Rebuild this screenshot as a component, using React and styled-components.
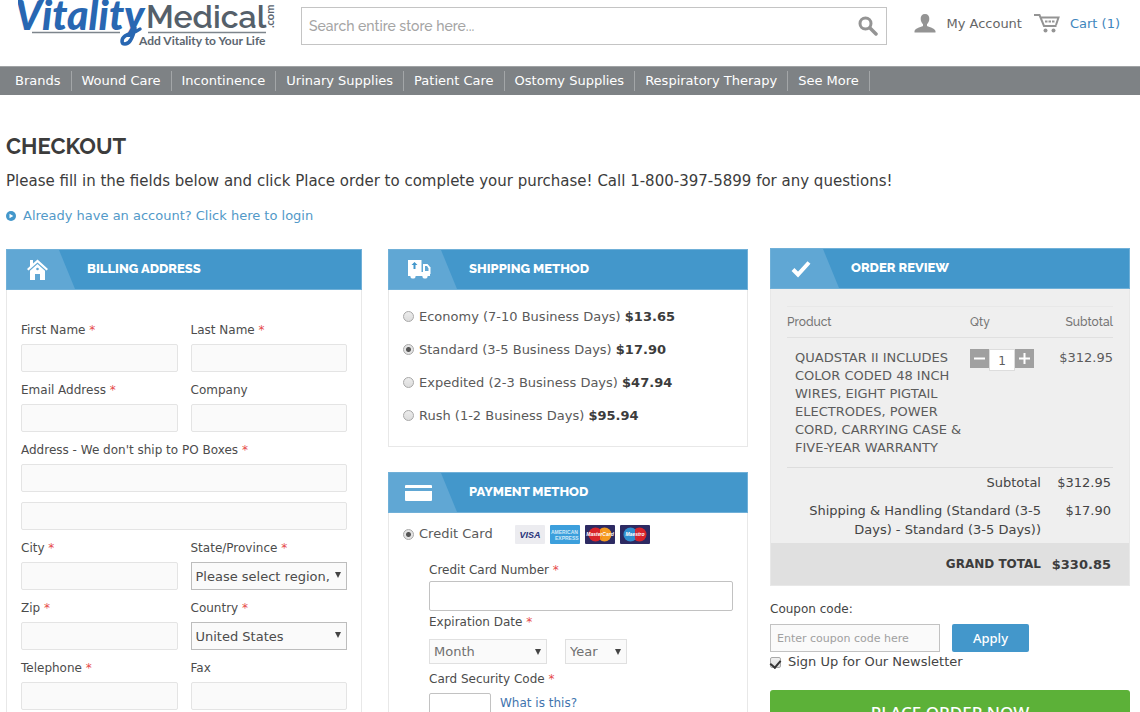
import { useState } from "react";
import styled, { createGlobalStyle } from "styled-components";

const GlobalStyle = createGlobalStyle`
    * {
        box-sizing: border-box;
    }

    body {
        margin: 0;
        background: #fff;
        color: #444;
        font-family: Verdana, "DejaVu Sans", sans-serif;
        font-size: 13px;
        overflow-x: hidden;
    }

    button, input, select {
        font-family: inherit;
        font-size: inherit;
        color: inherit;
        margin: 0;
    }

    a {
        text-decoration: none;
    }
`;

const menu = [
    "Brands",
    "Wound Care",
    "Incontinence",
    "Urinary Supplies",
    "Patient Care",
    "Ostomy Supplies",
    "Respiratory Therapy",
    "See More",
];

const billingFields = [
    { id: "firstname", label: "First Name", required: true },
    { id: "lastname", label: "Last Name", required: true },
    { id: "email", label: "Email Address", required: true },
    { id: "company", label: "Company" },
    { id: "street", label: "Address - We don't ship to PO Boxes", required: true, wide: true, lines: 2 },
    { id: "city", label: "City", required: true },
    { id: "region", label: "State/Province", required: true, options: ["Please select region, state or province"] },
    { id: "zip", label: "Zip", required: true },
    { id: "country", label: "Country", required: true, options: ["United States"] },
    { id: "telephone", label: "Telephone", required: true },
    { id: "fax", label: "Fax" },
];

const shippingMethods = [
    { id: "economy", name: "Economy (7-10 Business Days)", price: "$13.65" },
    { id: "standard", name: "Standard (3-5 Business Days)", price: "$17.90" },
    { id: "expedited", name: "Expedited (2-3 Business Days)", price: "$47.94" },
    { id: "rush", name: "Rush (1-2 Business Days)", price: "$95.94" },
];

const Header = styled.header`
    display: flex;
    align-items: flex-start;
    height: 66px;
    padding: 0 20px 0 18px;
`;

const LogoLink = styled.a`
    flex: 0 0 283px;
    height: 50px;
`;

const SearchForm = styled.form`
    flex: 1;
    display: flex;
    align-items: center;
    height: 38px;
    margin-top: 7px;
    border: 1px solid #c4c4c4;
`;

const SearchInput = styled.input`
    flex: 1;
    min-width: 0;
    height: 100%;
    padding: 0 7px;
    border: 0;
    outline: 0;
    background: none;
    font-family: Raleway, Lato, sans-serif;
    font-size: 14px;
    font-weight: 500;

    &::placeholder {
        color: #a4a4a4;
    }
`;

const SearchButton = styled.button`
    display: flex;
    padding: 0 8px;
    border: 0;
    background: none;
`;

const UserLinks = styled.nav`
    display: flex;
    align-items: center;
    height: 24px;
    margin: 11px 0 0 27px;
`;

const UserLink = styled.a`
    display: flex;
    align-items: center;
    gap: 10px;
    margin-right: ${({ $last }) => ($last ? "0" : "12px")};
    color: ${({ $blue }) => ($blue ? "#3f86bd" : "#666")};
`;

const MainMenu = styled.nav`
    display: flex;
    align-items: center;
    height: 29px;
    padding-left: 5px;
    background: #7e8285;
    border-top: 1px solid #a0a3a5;
`;

const MenuLink = styled.a`
    padding: 0 10px;
    line-height: 20px;
    color: #fff;
    border-right: 1px solid #a3a6a8;
`;

const Main = styled.main`
    padding: 36px 10px 0 6px;
`;

const Title = styled.h1`
    margin: 0;
    font-family: Raleway, Lato, sans-serif;
    font-size: 22px;
    font-weight: 700;
    line-height: 30px;
    color: #3c3c3c;
`;

const Intro = styled.p`
    margin: 10px 0 0;
    font-size: 15px;
    line-height: 20px;
    color: #3c3c3c;
`;

const LoginLink = styled.a`
    display: flex;
    align-items: center;
    gap: 7px;
    margin-top: 15px;
    line-height: 20px;
    color: #5299c8;
`;

const Columns = styled.div`
    display: grid;
    grid-template-columns: repeat(3, minmax(0, 1fr));
    align-items: start;
    gap: 22px;
    margin-top: 22px;
`;

const Column = styled.div`
    display: flex;
    flex-direction: column;
    gap: ${({ $gap }) => $gap || "25px"};
    padding: ${({ $inset }) => $inset || "0"};
`;

const Panel = styled.section`
    border: 1px solid #e8e8e8;
    border-top: 0;
    background: ${({ $grey }) => ($grey ? "#efefef" : "#fff")};
`;

const PanelHead = styled.div`
    display: flex;
    align-items: center;
    height: 41px;
    margin: 0 -1px;
    background: #4397cb;
    border: 1px solid #70b0d8;
`;

const PanelIcon = styled.span`
    display: flex;
    align-items: center;
    height: 100%;
    width: 68px;
    padding-left: ${({ $left }) => $left || "19px"};
    background: #60a7d4;
    clip-path: polygon(0 0, 52px 0, 68px 100%, 0 100%);
`;

const PanelTitle = styled.h2`
    margin: 0 0 2px 12px;
    font-family: Raleway, Lato, sans-serif;
    font-size: 13px;
    font-weight: 800;
    line-height: 20px;
    color: #fff;
`;

const BillingGrid = styled.div`
    display: grid;
    grid-template-columns: 1fr 1fr;
    gap: 9px 13px;
    padding: 31px 14px 20px;
`;

const Field = styled.div`
    display: flex;
    flex-direction: column;
    min-width: 0;
    grid-column: ${({ $wide }) => ($wide ? "1 / -1" : "auto")};
`;

const Label = styled.label`
    margin-bottom: ${({ $space }) => $space || "4px"};
    font-size: 12px;
    line-height: 19px;
    color: #4c4c4c;
`;

const Star = styled.em`
    font-style: normal;
    color: #e64a4a;
`;

const Input = styled.input`
    width: ${({ $width }) => $width || "100%"};
    height: ${({ $tall }) => ($tall ? "30px" : "28px")};
    padding: 0 6px;
    border: 1px solid ${({ $tall }) => ($tall ? "#c2c2c2" : "#e4e4e4")};
    border-radius: 2px;
    background: ${({ $tall }) => ($tall ? "#fff" : "#fafafa")};

    & + & {
        margin-top: 10px;
    }
`;

const SelectWrap = styled.div`
    position: relative;
    width: ${({ $width }) => $width || "100%"};

    &::after {
        content: "";
        position: absolute;
        top: 10px;
        right: 6px;
        border: solid transparent;
        border-width: 6px 3px 0;
        border-top-color: #444;
        pointer-events: none;
    }
`;

const Select = styled.select`
    appearance: none;
    display: block;
    width: 100%;
    height: ${({ $light }) => ($light ? "25px" : "28px")};
    padding: 0 14px 0 4px;
    border: 1px solid ${({ $light }) => ($light ? "#e0e0e0" : "#bdbdbd")};
    border-radius: 0;
    background: #fafafa;
    color: ${({ $light }) => ($light ? "#707070" : "#4c4c4c")};
`;

const MethodList = styled.div`
    display: flex;
    flex-direction: column;
    padding: 10px 14px 14px;
`;

const RadioLabel = styled.label`
    display: flex;
    align-items: center;
    gap: 5px;
    line-height: ${({ $short }) => ($short ? "20px" : "33px")};
    color: #5a5a5a;
`;

const Radio = styled.input`
    appearance: none;
    width: 11px;
    height: 11px;
    border: 1px solid #a8a8a8;
    border-radius: 50%;
    background: linear-gradient(#ececec, #dcdcdc);

    &:checked {
        background: radial-gradient(circle, #555 0 2px, #e4e4e4 3px);
    }
`;

const Price = styled.b`
    color: #3c3c3c;
`;

const CardRow = styled.div`
    display: flex;
    align-items: center;
    gap: 22px;
    padding: 11px 14px 0;
`;

const CardLogos = styled.div`
    display: flex;
    gap: 5px;
`;

const CardForm = styled.div`
    padding: 17px 14px 20px 40px;
`;

const CardField = styled(Field)`
    margin-bottom: ${({ $gap }) => $gap || "2px"};
`;

const InlineRow = styled.div`
    display: flex;
    align-items: ${({ $top }) => ($top ? "flex-start" : "center")};
    gap: ${({ $gap }) => $gap};
`;

const HelpLink = styled.a`
    font-size: 12px;
    line-height: 20px;
    color: #3f74ae;
`;

const ItemTable = styled.table`
    width: calc(100% - 32px);
    margin: 17px 16px 0;
    border-collapse: collapse;
    border-bottom: 1px solid #ddd;
`;

const HeadCell = styled.th`
    padding: 0;
    width: ${({ $width }) => $width || "auto"};
    height: 31px;
    border-top: 1px solid #e8e8e8;
    border-bottom: 1px solid #e0e0e0;
    font-family: Raleway, Lato, sans-serif;
    font-size: 12px;
    font-weight: 500;
    text-align: ${({ $right }) => ($right ? "right" : "left")};
    color: #757575;
`;

const ItemCell = styled.td`
    padding: ${({ $name }) => ($name ? "11px 0 10px 8px" : "11px 0 0")};
    vertical-align: top;
    line-height: 18px;
    text-align: ${({ $right }) => ($right ? "right" : "left")};
    color: #5c5c5c;
`;

const Stepper = styled.div`
    display: flex;
    align-items: flex-start;
`;

const StepButton = styled.button`
    display: flex;
    align-items: center;
    justify-content: center;
    width: 19px;
    height: 19px;
    padding: 0;
    border: 0;
    background: #a0a0a0;
`;

const QtyInput = styled.input`
    width: 26px;
    height: 22px;
    padding: 2px 0 0;
    border: 1px solid #ddd;
    background: #fff;
    font-size: 12px;
    text-align: center;
`;

const TotalsTable = styled.table`
    width: 100%;
    border-collapse: collapse;
`;

const TotalLabel = styled.th`
    padding: 5px 0 4px 20px;
    font-weight: 400;
    line-height: 19px;
    text-align: right;
    vertical-align: top;
`;

const TotalValue = styled.td`
    width: 88px;
    padding: 5px 18px 4px 0;
    line-height: 19px;
    text-align: right;
    vertical-align: top;
`;

const GrandRow = styled.tr`
    background: #e0e0e0;
    color: #3c3c3c;

    & > * {
        padding-top: 12px;
        padding-bottom: 11px;
        font-weight: 700;
    }

    & > th {
        font-size: 12px;
    }
`;

const Extras = styled.div`
    display: flex;
    flex-direction: column;
`;

const CouponLabel = styled.label`
    margin-bottom: 5px;
    font-size: 12px;
    line-height: 19px;
`;

const CouponInput = styled.input`
    width: 170px;
    height: 28px;
    padding: 0 6px;
    border: 1px solid #c2c2c2;
    background: #fafafa;
    font-size: 11px;

    &::placeholder {
        color: #a0a0a0;
    }
`;

const ApplyButton = styled.button`
    width: 77px;
    height: 28px;
    border: 0;
    border-radius: 2px;
    background: #4397cb;
    color: #fff;
    font-family: "Noto Sans", sans-serif;
    font-size: 13px;
    font-weight: 500;
`;

const CheckLabel = styled.label`
    display: flex;
    align-items: center;
    gap: 7px;
    line-height: 20px;
`;

const CheckInput = styled.input`
    appearance: none;
    display: flex;
    justify-content: center;
    width: 11px;
    height: 11px;
    border: 1px solid #a8a8a8;
    border-radius: 2px;
    background: linear-gradient(#f0f0f0, #dcdcdc);

    &:checked::before {
        content: "";
        width: 5px;
        height: 8px;
        border: solid #333;
        border-width: 0 2px 2px 0;
        transform: rotate(40deg);
    }
`;

const PlaceOrder = styled.button`
    height: 44px;
    margin-top: 18px;
    padding: 0;
    border: 0;
    border-radius: 3px;
    background: #5cb138;
    color: #fff;
    font-family: "Noto Sans", sans-serif;
    font-size: 17px;
    font-weight: 500;
`;

const Logo = () => (
    <svg width="262" height="50" viewBox="0 0 262 50" role="img" aria-label="Vitality Medical">
        <path d="M14 32.500H102M130 32.500H248" stroke="#7d858c" strokeWidth="1.500" />
        <path d="M117 28c-2 9-5 16-10 16-4 0-4-5 0-8 4-3 10-3 15-7" fill="none" stroke="#2867b2" strokeWidth="3.500" strokeLinecap="round" />
        <g fontFamily="Lato, sans-serif">
            <text x="-3" y="30" fontSize="41" fontWeight="900" fontStyle="italic" fill="#2867b2">
                Vitality
            </text>
            <text x="128" y="28" fontSize="32" fontWeight="600" fontFamily="Raleway, Lato, sans-serif" fill="#55606a">
                Medical
            </text>
            <text x="121" y="45" fontSize="12" fontWeight="700" fill="#5c6670">
                Add Vitality to Your Life
            </text>
            <text transform="translate(256 28) rotate(-90)" fontSize="11" fontWeight="700" fill="#5c6670">
                .com
            </text>
        </g>
    </svg>
);

const SearchIcon = () => (
    <svg width="20" height="20" viewBox="0 0 20 20" fill="none" stroke="#949494">
        <circle cx="7.500" cy="7.500" r="5.500" strokeWidth="3" />
        <path d="M12 12l6 6" strokeWidth="3.500" strokeLinecap="round" />
    </svg>
);

const UserIcon = () => (
    <svg width="22" height="19" viewBox="0 0 22 19" fill="#949494">
        <path d="M11 0c3 0 4.500 2 4.300 5-.1 2.400-1.100 4.200-2.300 5.200v1.500c0 1 8 2 8.500 5.300v1.500H.500V17C1 13.700 9 12.700 9 11.700v-1.500C7.800 9.200 6.800 7.400 6.700 5 6.500 2 8 0 11 0z" />
    </svg>
);

const CartIcon = () => (
    <svg width="26" height="20" viewBox="0 0 26 20" fill="none" stroke="#949494" strokeWidth="2">
        <path d="M0 2h5.500l4.500 11H22.500M6.500 4.500h18L22 12" />
        <path d="M11 8.500h2.500M14.500 8.500h2.500M18 8.500h2.500" />
        <circle cx="11.500" cy="17.500" r="2" fill="#949494" stroke="none" />
        <circle cx="19.500" cy="17.500" r="2" fill="#949494" stroke="none" />
    </svg>
);

const ArrowIcon = () => (
    <svg width="10" height="10" viewBox="0 0 10 10">
        <circle cx="5" cy="5" r="5" fill="#4397cb" />
        <path d="M3.500 2.700L7.300 5 3.500 7.300z" fill="#fff" />
    </svg>
);

const HomeIcon = () => (
    <svg width="23" height="22" viewBox="0 0 23 22">
        <path d="M4 1h3v3.500l4.500-4L22 10l-1.500 1.600-9-8-9 8L1 10l3-2.700z" fill="#fff" />
        <path d="M11.500 5l7.500 6.700V21h-5v-6H9v6H4v-9.300z" fill="#fff" />
        <circle cx="11.500" cy="10" r="1.300" fill="#60a7d4" />
    </svg>
);

const TruckIcon = () => (
    <svg width="23" height="19" viewBox="0 0 23 19">
        <path d="M0 0h13.500v13H0zM0 12h22v4H0z" fill="#fff" />
        <path d="M15 4h4.500l3 3.500V14H15z" fill="#fff" />
        <path d="M17 6h2l1.500 2.500V11H17z" fill="#60a7d4" />
        <path d="M6.500 2L9.500 5H7.500V9h-2V5h-2z" fill="#4397cb" />
        <circle cx="5" cy="16" r="2.600" fill="#fff" />
        <circle cx="17" cy="16" r="2.600" fill="#fff" />
    </svg>
);

const CreditIcon = () => (
    <svg width="27" height="16" viewBox="0 0 27 16">
        <rect width="27" height="16" rx="1" fill="#fff" />
        <rect y="3" width="27" height="3" fill="#60a7d4" />
    </svg>
);

const CheckIcon = () => (
    <svg width="20" height="18" viewBox="0 0 20 18" fill="none" stroke="#fff" strokeWidth="4">
        <path d="M2 9.500l5 5L18 2.500" />
    </svg>
);

const Visa = () => (
    <svg width="30" height="19" viewBox="0 0 30 19" role="img" aria-label="Visa">
        <rect width="30" height="19" rx="1" fill="#ececf0" />
        <text x="15" y="13" textAnchor="middle" fontFamily="Liberation Sans, sans-serif" fontSize="9" fontWeight="700" fontStyle="italic" fill="#27337a">
            VISA
        </text>
    </svg>
);

const Amex = () => (
    <svg width="30" height="19" viewBox="0 0 30 19" role="img" aria-label="American Express">
        <rect width="30" height="19" rx="1" fill="#3c9fdc" />
        <g fontFamily="Liberation Sans, sans-serif" fontSize="5" fontWeight="700" fill="#cfe8f8">
            <text x="1" y="9">AMERICAN</text>
            <text x="5" y="15">EXPRESS</text>
        </g>
    </svg>
);

const TwoCircles = ({ name, left, right }) => (
    <svg width="30" height="19" viewBox="0 0 30 19" role="img" aria-label={name}>
        <rect width="30" height="19" rx="1" fill="#2d2a62" />
        <circle cx="19.500" cy="9.500" r="7" fill={right} />
        <circle cx="10.500" cy="9.500" r="7" fill={left} />
        <path d="M15 4.100a7 7 0 0 1 0 10.800" fill={right} />
        <text x="15" y="11" textAnchor="middle" fontFamily="Liberation Sans, sans-serif" fontSize="5" fontWeight="700" fontStyle="italic" fill="#fff">
            {name}
        </text>
    </svg>
);

const FieldLabel = ({ id, text, required, space }) => (
    <Label htmlFor={id} $space={space}>
        {text} {required && <Star>*</Star>}
    </Label>
);

const PanelHeader = ({ icon, title, left }) => (
    <PanelHead>
        <PanelIcon $left={left}>{icon}</PanelIcon>
        <PanelTitle>{title}</PanelTitle>
    </PanelHead>
);

function BillingField({ field }) {
    return (
        <Field $wide={field.wide}>
            <FieldLabel id={field.id} text={field.label} required={field.required} />
            {field.options ? (
                <SelectWrap>
                    <Select id={field.id}>
                        {field.options.map(option => (
                            <option key={option}>{option}</option>
                        ))}
                    </Select>
                </SelectWrap>
            ) : (
                <Input id={field.id} type="text" />
            )}
            {field.lines === 2 && <Input type="text" aria-label="Address line 2" />}
        </Field>
    );
}

function App() {
    const [shipping, setShipping] = useState("standard");
    const [qty, setQty] = useState(1);

    return (
        <>
            <GlobalStyle />
            <Header>
                <LogoLink href="#">
                    <Logo />
                </LogoLink>
                <SearchForm onSubmit={e => e.preventDefault()}>
                    <SearchInput type="text" aria-label="Search" placeholder="Search entire store here..." />
                    <SearchButton type="submit" aria-label="Search">
                        <SearchIcon />
                    </SearchButton>
                </SearchForm>
                <UserLinks>
                    <UserLink href="#">
                        <UserIcon />
                        My Account
                    </UserLink>
                    <UserLink href="#" $blue $last>
                        <CartIcon />
                        Cart (1)
                    </UserLink>
                </UserLinks>
            </Header>
            <MainMenu>
                {menu.map(item => (
                    <MenuLink key={item} href="#">
                        {item}
                    </MenuLink>
                ))}
            </MainMenu>

            <Main>
                <Title>CHECKOUT</Title>
                <Intro>
                    Please fill in the fields below and click Place order to complete your purchase! Call 1-800-397-5899 for any questions!
                </Intro>
                <LoginLink href="#">
                    <ArrowIcon />
                    Already have an account? Click here to login
                </LoginLink>

                <Columns>
                    <Column $inset="1px 4px 0 0">
                        <Panel>
                            <PanelHeader icon={<HomeIcon />} title="BILLING ADDRESS" />
                            <BillingGrid>
                                {billingFields.map(field => (
                                    <BillingField key={field.id} field={field} />
                                ))}
                            </BillingGrid>
                        </Panel>
                    </Column>

                    <Column $inset="1px 0 0">
                        <Panel>
                            <PanelHeader icon={<TruckIcon />} title="SHIPPING METHOD" />
                            <MethodList>
                                {shippingMethods.map(method => (
                                    <RadioLabel key={method.id}>
                                        <Radio
                                            type="radio"
                                            name="shipping"
                                            checked={shipping === method.id}
                                            onChange={() => setShipping(method.id)}
                                        />
                                        <span>
                                            {method.name} <Price>{method.price}</Price>
                                        </span>
                                    </RadioLabel>
                                ))}
                            </MethodList>
                        </Panel>
                        <Panel>
                            <PanelHeader icon={<CreditIcon />} title="PAYMENT METHOD" left="16px" />
                            <CardRow>
                                <RadioLabel $short>
                                    <Radio type="radio" name="payment" defaultChecked />
                                    Credit Card
                                </RadioLabel>
                                <CardLogos>
                                    <Visa />
                                    <Amex />
                                    <TwoCircles name="MasterCard" left="#d8232a" right="#f59a1f" />
                                    <TwoCircles name="Maestro" left="#2f8fd0" right="#d8232a" />
                                </CardLogos>
                            </CardRow>
                            <CardForm>
                                <CardField>
                                    <FieldLabel id="card" text="Credit Card Number" required space="1px" />
                                    <Input id="card" type="text" $tall />
                                </CardField>
                                <CardField $gap="6px">
                                    <FieldLabel id="month" text="Expiration Date" required space="7px" />
                                    <InlineRow $gap="18px">
                                        <SelectWrap $width="118px">
                                            <Select id="month" $light>
                                                <option>Month</option>
                                            </Select>
                                        </SelectWrap>
                                        <SelectWrap $width="62px">
                                            <Select aria-label="Year" $light>
                                                <option>Year</option>
                                            </Select>
                                        </SelectWrap>
                                    </InlineRow>
                                </CardField>
                                <CardField>
                                    <FieldLabel id="cvv" text="Card Security Code" required />
                                    <InlineRow $gap="9px" $top>
                                        <Input id="cvv" type="text" $tall $width="62px" />
                                        <HelpLink href="#">What is this?</HelpLink>
                                    </InlineRow>
                                </CardField>
                            </CardForm>
                        </Panel>
                    </Column>

                    <Column $gap="14px">
                        <Panel $grey>
                            <PanelHeader icon={<CheckIcon />} title="ORDER REVIEW" left="20px" />
                            <ItemTable>
                                <thead>
                                    <tr>
                                        <HeadCell>Product</HeadCell>
                                        <HeadCell $width="66px">Qty</HeadCell>
                                        <HeadCell $width="77px" $right>
                                            Subtotal
                                        </HeadCell>
                                    </tr>
                                </thead>
                                <tbody>
                                    <tr>
                                        <ItemCell $name>
                                            QUADSTAR II INCLUDES COLOR CODED 48 INCH WIRES, EIGHT PIGTAIL ELECTRODES, POWER CORD, CARRYING CASE &amp; FIVE-YEAR WARRANTY
                                        </ItemCell>
                                        <ItemCell>
                                            <Stepper>
                                                <StepButton type="button" aria-label="Decrease" onClick={() => setQty(Math.max(1, qty - 1))}>
                                                    <svg width="11" height="11" stroke="#fff" strokeWidth="2">
                                                        <path d="M0 5.500h11" />
                                                    </svg>
                                                </StepButton>
                                                <QtyInput type="text" aria-label="Quantity" value={qty} readOnly />
                                                <StepButton type="button" aria-label="Increase" onClick={() => setQty(qty + 1)}>
                                                    <svg width="11" height="11" stroke="#fff" strokeWidth="2">
                                                        <path d="M0 5.500h11M5.500 0v11" />
                                                    </svg>
                                                </StepButton>
                                            </Stepper>
                                        </ItemCell>
                                        <ItemCell $right>$312.95</ItemCell>
                                    </tr>
                                </tbody>
                            </ItemTable>
                            <TotalsTable>
                                <tbody>
                                    <tr>
                                        <TotalLabel scope="row">Subtotal</TotalLabel>
                                        <TotalValue>$312.95</TotalValue>
                                    </tr>
                                    <tr>
                                        <TotalLabel scope="row">Shipping &amp; Handling (Standard (3-5 Days) - Standard (3-5 Days))</TotalLabel>
                                        <TotalValue>$17.90</TotalValue>
                                    </tr>
                                    <GrandRow>
                                        <TotalLabel scope="row">GRAND TOTAL</TotalLabel>
                                        <TotalValue>$330.85</TotalValue>
                                    </GrandRow>
                                </tbody>
                            </TotalsTable>
                        </Panel>
                        <Extras>
                            <CouponLabel htmlFor="coupon">Coupon code:</CouponLabel>
                            <InlineRow $gap="12px">
                                <CouponInput id="coupon" type="text" placeholder="Enter coupon code here" />
                                <ApplyButton type="button">Apply</ApplyButton>
                            </InlineRow>
                            <CheckLabel>
                                <CheckInput type="checkbox" defaultChecked />
                                Sign Up for Our Newsletter
                            </CheckLabel>
                            <PlaceOrder type="button">PLACE ORDER NOW</PlaceOrder>
                        </Extras>
                    </Column>
                </Columns>
            </Main>
        </>
    );
}

export default App;
